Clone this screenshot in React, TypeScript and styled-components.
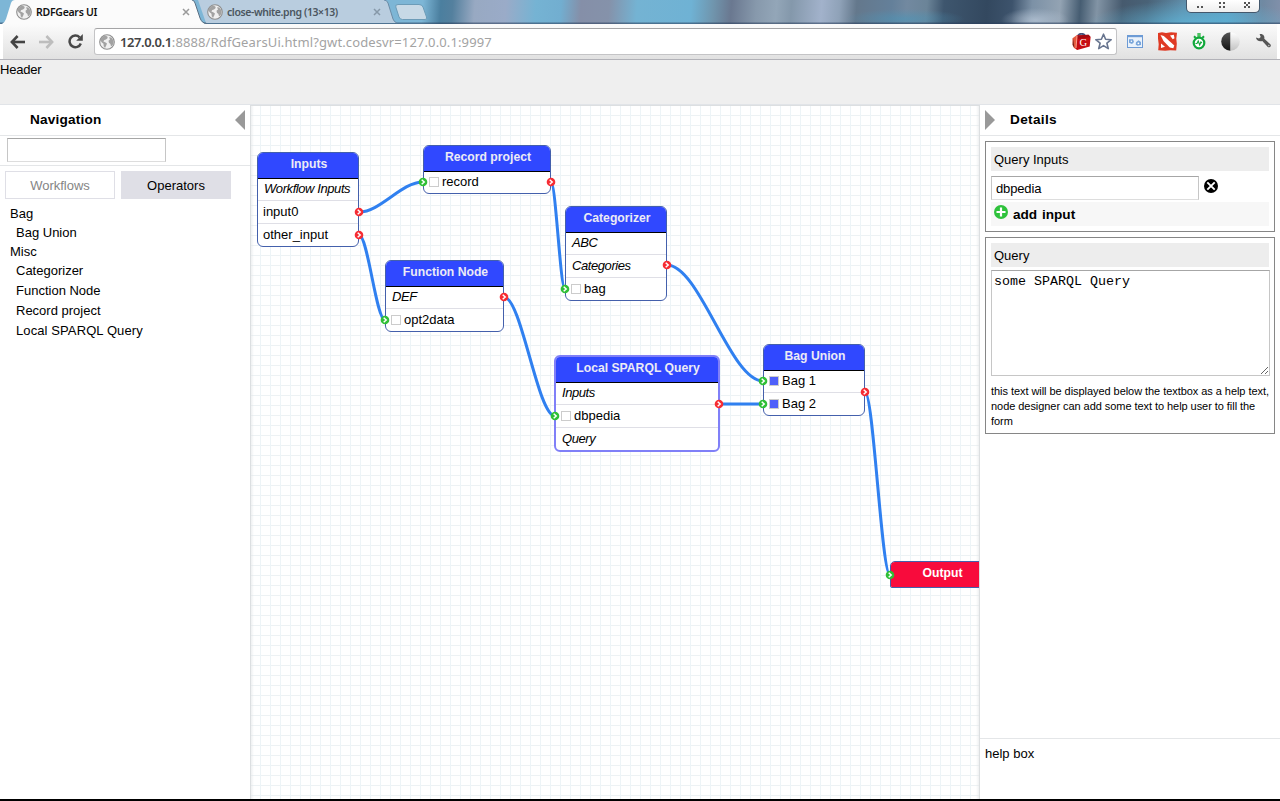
import React from "react";
import styled, { createGlobalStyle } from "styled-components";

const GlobalStyle = createGlobalStyle`
  *, *::before, *::after { box-sizing: border-box; }
  html, body { margin: 0; padding: 0; overflow: hidden; }
  body { background: #fff; color: #000; font: 13px/16px "Liberation Sans", Arial, sans-serif; }
  svg { display: block; flex: none; }
`;

const Window = styled.div`
  width: 1280px;
  height: 801px;
  display: flex;
  flex-direction: column;
  overflow: hidden;
  border-bottom: 2px solid #000;
`;

/* ---------- browser chrome ---------- */

const TabStrip = styled.div`
  height: 24px;
  flex: none;
  display: flex;
  align-items: flex-start;
  position: relative;
  overflow: hidden;
  background:
    linear-gradient(180deg, transparent 22px, rgba(40, 60, 90, 0.55) 23px),
    radial-gradient(ellipse 34px 12px at 1035px 20px, rgba(180, 195, 212, 0.8), transparent),
    radial-gradient(ellipse 60px 10px at 905px 19px, rgba(75, 150, 185, 0.6), transparent),
    radial-gradient(ellipse 110px 26px at 1195px 26px, rgba(95, 180, 215, 0.9), transparent),
    linear-gradient(94deg, #7db6d6 0, #7db6d6 422px, #4b7f9f 440px, #54809e 452px, #98a9c2 474px,
      #9aabc8 505px, #75b3d3 535px, #72aed0 560px, #858fa8 580px, #8592aa 608px, #74b3d3 636px,
      #6fb2d4 690px, #7095ad 712px, #6a7890 730px, #8799ac 755px, #93a6b8 775px, #8498ab 790px,
      #a2b2cb 820px, #8fa2b8 838px, #64788c 855px, #64809a 890px, #7289a0 905px, #6b8498 925px,
      #3e566e 942px, #33485f 985px, #3d536c 1010px, #7c91a6 1030px, #93a3b3 1058px, #465d72 1078px,
      #8294a5 1095px, #465a6e 1120px, #496277 1145px, #5f8ba7 1180px, #5c9fc2 1225px, #7089a2 1260px, #8391ab 1280px);
`;

const Tab = styled.div<{ $active?: boolean }>`
  height: 24px;
  width: ${(p) => (p.$active ? 206 : 200)}px;
  margin-left: ${(p) => (p.$active ? 0 : -8)}px;
  padding-left: ${(p) => (p.$active ? 16 : 9)}px;
  display: flex;
  align-items: center;
  position: relative;
  z-index: ${(p) => (p.$active ? 1 : 0)};
  font: 600 10.5px/24px "Noto Sans", "Open Sans", sans-serif;
  color: ${(p) => (p.$active ? "#111" : "#4b5660")};
`;

const TabShape = styled.svg`
  position: absolute;
  left: 0;
  top: 0;
`;

const TabLabel = styled.span<{ $width: number; $spacing: number }>`
  position: relative;
  width: ${(p) => p.$width}px;
  margin-left: 4px;
  white-space: nowrap;
  letter-spacing: ${(p) => p.$spacing}px;
`;

const TabIcon = styled.span`
  position: relative;
  display: block;
`;

const NewTab = styled.svg`
  margin: 4px 0 0 -3px;
`;

const WindowControls = styled.div`
  position: absolute;
  left: 1186px;
  top: 0;
  width: 74px;
  height: 13px;
  border: 1px solid #44586c;
  border-top: 0;
  border-radius: 0 0 5px 5px;
  background: linear-gradient(#fff, #eee);
`;

const Toolbar = styled.div`
  height: 36px;
  flex: none;
  display: flex;
  align-items: center;
  padding: 0 8px 0 10px;
  border-bottom: 1px solid #b2b2b8;
  background: linear-gradient(90deg, #fff 3px, transparent 3px, transparent 1277px, #fff 1277px),
    linear-gradient(#fbfbfb, #e1e1e1);
  gap: 14px;
`;

const AddressBar = styled.div`
  width: 1023px;
  height: 27px;
  margin-left: -3px;
  padding: 0 4px;
  display: flex;
  align-items: center;
  border: 1px solid #c4c4c6;
  border-top-color: #a4a4a6;
  border-radius: 3px;
  background: #fff;
`;

const Url = styled.span`
  flex: 1;
  margin-left: 5px;
  font: 13px/20px "Noto Sans", "Open Sans", sans-serif;
  letter-spacing: 0.12px;
  color: #a3a3a3;
  b { color: #444; font-weight: 600; letter-spacing: -0.4px; }
`;

const PageActions = styled.div`
  display: flex;
  align-items: center;
  gap: 4px;
`;

const Extensions = styled.div`
  display: flex;
  align-items: center;
  margin-left: -4px;
  gap: 15px;
`;

/* ---------- application ---------- */

const Header = styled.header`
  height: 45px;
  flex: none;
  padding-top: 2px;
  background: #efefef;
  border-bottom: 1px solid #e1e4e8;
  letter-spacing: -0.2px;
`;

const Body = styled.main`
  flex: 1;
  min-height: 0;
  display: flex;
`;

const Panel = styled.aside<{ $width: number }>`
  width: ${(p) => p.$width}px;
  flex: none;
  display: flex;
  flex-direction: column;
  background: #fff;
`;

const PanelTitle = styled.div<{ $side: "left" | "right" }>`
  height: 31px;
  flex: none;
  display: flex;
  align-items: center;
  justify-content: ${(p) => (p.$side === "left" ? "space-between" : "flex-start")};
  gap: 15px;
  padding: ${(p) => (p.$side === "left" ? "0 5px 0 30px" : "0 5px")};
  border-bottom: 1px solid #e4e6e8;
  font-weight: bold;
  font-size: 13.6px;
  letter-spacing: ${(p) => (p.$side === "left" ? 0.2 : 0.35)}px;
`;

const TextInput = styled.input`
  display: block;
  height: 24px;
  padding: 1px 4px;
  border: 1px solid #c6c6c6;
  border-top-color: #a6a6a6;
  border-bottom-color: #ddd;
  border-radius: 0;
  outline: none;
  background: #fff;
  color: #000;
  font: 13px "Liberation Sans", Arial, sans-serif;
  letter-spacing: -0.15px;
`;

const SearchRow = styled.div`
  height: 30px;
  padding: 2px 7px;
  border-bottom: 1px solid #e4e6e8;
  ${TextInput} { width: 159px; }
`;

const TabButtons = styled.div`
  display: flex;
  gap: 6px;
  padding: 5px 5px;
`;

const TabButton = styled.button<{ $active?: boolean }>`
  width: 110px;
  height: 28px;
  padding: 0;
  border: 1px solid #dfdfe6;
  background: ${(p) => (p.$active ? "#dfdfe6" : "#fff")};
  color: ${(p) => (p.$active ? "#000" : "#858585")};
  font: 13px "Liberation Sans", Arial, sans-serif;
`;

const Group = styled.section`
  padding-left: 10px;
`;

const GroupName = styled.div`
  height: 19px;
  line-height: 19px;
`;

const OperatorList = styled.div`
  display: flex;
  flex-direction: column;
  gap: 1px;
  padding-left: 6px;
`;

const Operator = styled.div`
  height: 19px;
  line-height: 19px;
  letter-spacing: ${(p) => (String(p.children).includes("SPARQL") ? 0.1 : 0)}px;
`;

/* ---------- workflow canvas ---------- */

const Canvas = styled.div`
  width: 730px;
  flex: none;
  position: relative;
  overflow: hidden;
  border: solid #dcdfe1;
  border-width: 1px 1px 0 1px;
  background:
    linear-gradient(90deg, rgba(225, 228, 230, 0.55), transparent 3px),
    linear-gradient(270deg, rgba(225, 228, 230, 0.55), transparent 3px),
    linear-gradient(90deg, transparent 9px, #edf4f7 9px) 0 0 / 10px 10px,
    linear-gradient(180deg, transparent 9px, #edf2f4 9px) 0 0 / 10px 10px,
    #fff;
`;

const NodeBox = styled.div<{ $selected?: boolean; $output?: boolean }>`
  position: absolute;
  border: ${(p) => (p.$selected ? "2px solid #8080f8" : "1px solid #4460ac")};
  border-radius: ${(p) => (p.$output ? "5px 5px 2px 2px" : "6px")};
  background: #fff;
  overflow: hidden;
`;

const NodeTitle = styled.div<{ $output?: boolean }>`
  height: ${(p) => (p.$output ? 25 : 26)}px;
  padding-left: 2px;
  border-bottom: ${(p) => (p.$output ? 0 : "1px solid #000")};
  background: ${(p) => (p.$output ? "#f80b3c" : "#3048ff")};
  color: ${(p) => (p.$output ? "#fff" : "#ecebf5")};
  font-weight: bold;
  font-size: 12.2px;
  line-height: 23px;
  text-align: center;
  white-space: nowrap;
`;

const NodeRow = styled.div<{ $italic?: boolean }>`
  box-sizing: content-box;
  height: 22px;
  display: flex;
  align-items: center;
  gap: 3px;
  padding-left: ${(p) => (p.$italic ? 6 : 5)}px;
  border-bottom: 1px solid #dfdfe6;
  font-style: ${(p) => (p.$italic ? "italic" : "normal")};
  letter-spacing: ${(p) => (p.$italic ? "-0.42px" : "0")};
  line-height: 20px;
  white-space: nowrap;
  ${NodeTitle} + & { height: 20px; padding-bottom: 1px; }
  &:last-child { border-bottom: 0; }
`;

const Check = styled.span<{ $filled?: boolean }>`
  width: 10px;
  height: 10px;
  border: 1px solid #ccc;
  background: ${(p) => (p.$filled ? "#4f60fa" : "#fff")};
`;

const Layer = styled.svg`
  position: absolute;
  left: 0;
  top: 0;
`;

/* ---------- details ---------- */

const Details = styled.div`
  flex: 1;
  padding: 5px;
  display: flex;
  flex-direction: column;
  gap: 5px;
`;

const FieldBox = styled.section<{ $height: number }>`
  height: ${(p) => p.$height}px;
  padding: 5px;
  border: 1px solid #868686;
`;

const FieldTitle = styled.div`
  width: 278px;
  height: 24px;
  padding-left: 3px;
  line-height: 25px;
  background: #ededed;
`;

const ValueRow = styled.div`
  display: flex;
  gap: 5px;
  margin-top: 5px;
  svg { margin-top: 3px; }
  ${TextInput} { width: 208px; }
`;

const AddRow = styled.div`
  width: 278px;
  height: 24px;
  margin-top: 2px;
  padding: 3px 3px 0;
  display: flex;
  gap: 5px;
  background: #f7f7f7;
  font-weight: bold;
  font-size: 13.6px;
  line-height: 20px;
  word-spacing: 1px;
`;

const QueryArea = styled.textarea`
  display: block;
  width: 279px;
  height: 106px;
  margin-top: 3px;
  padding: 3px 2px;
  border: 1px solid #c6c6c6;
  border-top-color: #a6a6a6;
  border-radius: 0;
  outline: none;
  background: #fff;
  color: #000;
  font: 13.33px/16px "Liberation Mono", "Courier New", monospace;
`;

const Hint = styled.p`
  width: 284px;
  margin: 8px 0 0;
  font-size: 11px;
  line-height: 15px;
  letter-spacing: -0.055px;
`;

const HelpBox = styled.div`
  height: 61px;
  flex: none;
  padding: 7px 5px;
  border-top: 1px solid #e4e6e8;
`;

/* ---------- icons ---------- */

const Globe = ({ size = 16 }: { size?: number }) => (
  <svg width={size} height={size} viewBox="0 0 16 16">
    <circle cx="8" cy="8" r="7.3" fill="#f0f0f0" stroke="#8d8d8d" strokeWidth="1.1" />
    <path d="M2 4.2 5 1.8 8.2 2.2 8.7 4 7 5.6 5.3 6 4.4 7.5 6.2 8.2 8 9.6 7.2 11.6 6 14 4.7 12.3 4.5 9.8 2.6 8.2 1.4 6.3z" fill="#a2a2a2" />
    <path d="M10 3.2 12.4 3.4 14.5 6.6 14.6 9 13.4 11.6 12 12.2 11.4 9.9 9.9 8.8 9.5 6.7 11 5.4z" fill="#a2a2a2" />
  </svg>
);

const CloseX = ({ color }: { color: string }) => (
  <svg width="8" height="8" viewBox="0 0 8 8">
    <path d="M1 1 7 7M7 1 1 7" stroke={color} strokeWidth="1.5" />
  </svg>
);

const Arrow = ({ color, flip }: { color: string; flip?: boolean }) => (
  <svg width="15" height="14" viewBox="0 0 15 14">
    <g transform={flip ? "matrix(-1 0 0 1 15 0)" : undefined} fill="none" stroke={color} strokeWidth="2.6">
      <path d="M1.8 7H15" />
      <path d="M7.6 1 1.9 7l5.7 6" />
    </g>
  </svg>
);

const Reload = () => (
  <svg width="15" height="15" viewBox="0 0 15 15">
    <path d="M12.8 9.5A5.8 5.8 0 1 1 11.6 3.4" fill="none" stroke="#484848" strokeWidth="2.5" />
    <path d="M14.8 0v6.8H8.2z" fill="#484848" />
  </svg>
);

const Toolbox = () => (
  <svg width="19" height="18" viewBox="0 0 19 18">
    <path d="M6 2.5Q9-1 13 2.3" fill="none" stroke="#46507a" strokeWidth="1.8" />
    <path d="M.5 5.2 5 2 5.6 17 2 15 .6 12z" fill="#e65a3e" />
    <path d="M1 5 .7 12 2.4 15z" fill="#702018" />
    <path d="M5 2.4 16.5 1.8 18.6 4 17.7 13.5 5.2 17 3.6 15.5z" fill="#c60d12" />
    <path d="m5 2.4 11.5-.6L18.6 4 6 6z" fill="#a20a12" />
    <path d="M5 3 4 15" stroke="#ffb09a" strokeWidth=".9" />
    <text x="7.6" y="13" fontFamily="Liberation Serif, serif" fontSize="10.5" fill="#fff">G</text>
  </svg>
);

const Star = () => (
  <svg width="17" height="17" viewBox="0 0 17 17">
    <path d="m8.500 1.200 2.100 5.100 5.600.4-4.300 3.500 1.400 5.400-4.800-3-4.800 3 1.400-5.400L.800 6.700l5.600-.4z" fill="#fff" stroke="#68758f" strokeWidth="1.6" strokeLinejoin="round" />
  </svg>
);

const WindowIcon = () => (
  <svg width="16" height="13" viewBox="0 0 16 13">
    <rect x=".5" y=".5" width="15" height="12" fill="#eaf2fb" stroke="#6d9bd5" />
    <path d="M0 1.2h16" stroke="#6d9bd5" strokeWidth="2" />
    <path d="M2 4.2h4l1 2.7-2 2-3-1.2zM9 7.2l2.5-2L14 7v3l-3.500.7-1.800-1.200z" fill="#78a5da" />
    <circle cx="4.4" cy="6.3" r=".8" fill="#fff" />
    <circle cx="11.4" cy="8.3" r=".9" fill="#fff" />
  </svg>
);

const SwordIcon = () => (
  <svg width="19" height="19" viewBox="0 0 19 19">
    <path d="m0 1 4-.8 4 .7 5-.7 6 .6-.7 6 .5 5-.6 6.800-6-.4-5 .5-7-.5.5-6L0 6.500z" fill="#df3a24" />
    <path d="m2.500 3 3.300 1 10.500 9.600-1 2.600-3.500-.7L5.500 9z" fill="#fff" />
    <path d="m12 3.500 3.800-.8.700 3.600-1.800 1zM3 11.500l4 3.300-4 1.200z" fill="#fff" />
  </svg>
);

const Stopwatch = () => (
  <svg width="14" height="17" viewBox="0 0 14 17">
    <path d="M5.300 0h3.400v4H5.300z" fill="#4cc262" />
    <path d="m2 3.200 1.700 1.700M12 3.200l-1.700 1.700" stroke="#10a83a" strokeWidth="2" />
    <circle cx="7" cy="10" r="5.300" fill="#fff" stroke="#10a83a" strokeWidth="2.200" />
    <path d="M3.500 10.500H5L6.200 8l1.500 4 1.200-3 1 1" fill="none" stroke="#10a83a" strokeWidth="1.100" />
  </svg>
);

const HalfCircle = () => (
  <svg width="19" height="19" viewBox="0 0 19 19">
    <defs>
      <linearGradient id="dark" x1="0" y1="0" x2="0" y2="1"><stop stopColor="#555" /><stop offset="1" stopColor="#111" /></linearGradient>
      <linearGradient id="light" x1="0" y1="0" x2="0" y2="1"><stop stopColor="#fff" /><stop offset="1" stopColor="#c2c2c2" /></linearGradient>
    </defs>
    <path d="M9.500.2a9.300 9.300 0 0 0 0 18.600z" fill="url(#dark)" />
    <path d="M9.500.2a9.300 9.300 0 0 1 0 18.600z" fill="url(#light)" />
  </svg>
);

const Wrench = () => (
  <svg width="17" height="17" viewBox="0 0 17 17">
    <path d="M1 4.600 4 5.600 5.700 4 4.600 1.100C8 .5 10 3 9.300 5.800l6 5.400c1.600 1.800-.7 4.200-2.500 2.700L7.300 8C4.500 9 1 7.400 1 4.600z" fill="#555" />
    <circle cx="13.800" cy="12.600" r=".8" fill="#bbb" />
  </svg>
);

const Triangle = ({ right }: { right?: boolean }) => (
  <svg width="10" height="20" viewBox="0 0 10 20">
    <path d={right ? "M0 0 10 10 0 20z" : "M10 0 0 10 10 20z"} fill="#999" />
  </svg>
);

const RemoveIcon = () => (
  <svg width="14" height="14" viewBox="0 0 14 14">
    <circle cx="7" cy="7" r="7" fill="#000" />
    <path d="m3.300 3.300 7.400 7.400M10.700 3.300 3.300 10.700" stroke="#fff" strokeWidth="1.900" />
  </svg>
);

const AddIcon = () => (
  <svg width="14" height="14" viewBox="0 0 14 14">
    <circle cx="7" cy="7" r="7" fill="#2fc23c" />
    <path d="M7 2.500v9M2.500 7h9" stroke="#fff" strokeWidth="2.200" />
  </svg>
);

/* ---------- data ---------- */

type Row = { text: string; italic?: boolean; check?: "empty" | "filled" };
type NodeData = { title: string; x: number; y: number; w: number; rows: Row[]; selected?: boolean; output?: boolean };

/* Node positions are measured from the page corner; the canvas content starts at this origin. */
const ORIGIN = { x: 251, y: 106 };

const nodes: NodeData[] = [
  { title: "Inputs", x: 257, y: 152, w: 102, rows: [{ text: "Workflow Inputs", italic: true }, { text: "input0" }, { text: "other_input" }] },
  { title: "Record project", x: 423, y: 145, w: 128, rows: [{ text: "record", check: "empty" }] },
  { title: "Function Node", x: 385, y: 260, w: 119, rows: [{ text: "DEF", italic: true }, { text: "opt2data", check: "empty" }] },
  { title: "Categorizer", x: 565, y: 206, w: 102, rows: [{ text: "ABC", italic: true }, { text: "Categories", italic: true }, { text: "bag", check: "empty" }] },
  { title: "Local SPARQL Query", x: 554, y: 355, w: 166, selected: true, rows: [{ text: "Inputs", italic: true }, { text: "dbpedia", check: "empty" }, { text: "Query", italic: true }] },
  { title: "Bag Union", x: 763, y: 344, w: 102, rows: [{ text: "Bag 1", check: "filled" }, { text: "Bag 2", check: "filled" }] },
  { title: "Output", x: 890, y: 561, w: 103, rows: [], output: true },
];

const edges: [number, number, number, number][] = [
  [359, 212, 423, 182],
  [359, 235, 385, 320],
  [551, 182, 565, 289],
  [504, 297, 555, 416],
  [667, 265, 763, 381],
  [719, 404, 763, 404],
  [865, 392, 890, 575],
];

const edgePath = ([x1, y1, x2, y2]: [number, number, number, number]) => {
  const k = (x2 - x1) * 0.34;
  return `M${x1} ${y1}C${x1 + k} ${y1} ${x2 - k} ${y2} ${x2} ${y2}`;
};

const Port = ({ x, y, color }: { x: number; y: number; color: string }) => (
  <g transform={`translate(${x} ${y})`}>
    <circle r="4.300" fill={color} />
    <path d="M-1.300-2.300 1.200 0-1.300 2.300" fill="none" stroke="#fff" strokeWidth="1.500" />
  </g>
);

const WorkflowNode = ({ node }: { node: NodeData }) => (
  <NodeBox
    $selected={node.selected}
    $output={node.output}
    style={{ left: node.x - ORIGIN.x, top: node.y - ORIGIN.y, width: node.w }}
  >
    <NodeTitle $output={node.output}>{node.title}</NodeTitle>
    {node.rows.map((row) => (
      <NodeRow key={row.text} $italic={row.italic}>
        {row.check && <Check $filled={row.check === "filled"} />}
        {row.text}
      </NodeRow>
    ))}
  </NodeBox>
);

export default function App() {
  return (
    <Window>
      <GlobalStyle />
      <TabStrip>
        <Tab $active>
          <TabShape width="208" height="24">
            <path d="M2 24Q5 22 6 19L11 3Q12 0 15 0H191Q194 0 195 3L200 18Q202 24 207 24z" fill="#fbfbfb" />
            <path d="M192 0Q194 0 195 3L200 18Q202 23.500 207 23.500" fill="none" stroke="#5a6f84" />
          </TabShape>
          <TabIcon><Globe /></TabIcon>
          <TabLabel $width={146} $spacing={-0.27}>RDFGears UI</TabLabel>
          <TabIcon><CloseX color="#9a9a9a" /></TabIcon>
        </Tab>
        <Tab>
          <TabShape width="200" height="24">
            <path d="M0 0H186Q189 0 190 3L195 19Q196 22 199 23H8z" fill="#b9cddf" />
            <path d="M186 0Q189 0 190 3L195 19Q196 22 199 23" fill="none" stroke="#6a8ba6" />
          </TabShape>
          <TabIcon><Globe /></TabIcon>
          <TabLabel $width={146} $spacing={-0.42}>close-white.png (13×13)</TabLabel>
          <TabIcon><CloseX color="#8698a8" /></TabIcon>
        </Tab>
        <NewTab width="33" height="16" viewBox="0 0 33 16">
          <path d="M3 .5H24Q27 .5 28 3L31.500 13Q32.500 15.500 30 15.500H7.500Q5 15.500 4 13L.8 3Q0 .5 3 .5z" fill="#c7d9e6" stroke="#6c9cb8" />
        </NewTab>
        <WindowControls>
          <svg width="72" height="12" viewBox="0 0 72 12" fill="#555">
            <path d="M10 6h2v2h-2zM14 6h2v2h-2zM32 2h2v2h-2zM36 2h2v2h-2zM32 6h2v2h-2zM36 6h2v2h-2z" />
            <path d="M57 2h2v2h-2zM61 2h2v2h-2zM59 4h2v2h-2zM57 6h2v2h-2zM61 6h2v2h-2z" />
          </svg>
        </WindowControls>
      </TabStrip>
      <Toolbar>
        <Arrow color="#444" />
        <Arrow color="#bdbdbd" flip />
        <Reload />
        <AddressBar>
          <Globe />
          <Url><b>127.0.0.1</b>:8888/RdfGearsUi.html?gwt.codesvr=127.0.0.1:9997</Url>
          <PageActions>
            <Toolbox />
            <Star />
          </PageActions>
        </AddressBar>
        <Extensions>
          <WindowIcon />
          <SwordIcon />
          <Stopwatch />
          <HalfCircle />
          <Wrench />
        </Extensions>
      </Toolbar>

      <Header>Header</Header>

      <Body>
        <Panel $width={250}>
          <PanelTitle $side="left">
            Navigation
            <Triangle />
          </PanelTitle>
          <SearchRow><TextInput /></SearchRow>
          <TabButtons>
            <TabButton>Workflows</TabButton>
            <TabButton $active>Operators</TabButton>
          </TabButtons>
          <Group>
            <GroupName>Bag</GroupName>
            <OperatorList><Operator>Bag Union</Operator></OperatorList>
          </Group>
          <Group>
            <GroupName>Misc</GroupName>
            <OperatorList>
              <Operator>Categorizer</Operator>
              <Operator>Function Node</Operator>
              <Operator>Record project</Operator>
              <Operator>Local SPARQL Query</Operator>
            </OperatorList>
          </Group>
        </Panel>

        <Canvas>
          {nodes.map((node) => <WorkflowNode key={node.title} node={node} />)}
          <Layer width="728" height="693" viewBox={`${ORIGIN.x} ${ORIGIN.y} 728 693`}>
            {edges.map((edge) => (
              <path key={edge.join()} d={edgePath(edge)} fill="none" stroke="#3080f0" strokeWidth="3" />
            ))}
            {edges.map(([x1, y1, x2, y2]) => (
              <g key={`${x1}-${y1}`}>
                <Port x={x1} y={y1} color="#f62c33" />
                <Port x={x2} y={y2} color="#2fbf36" />
              </g>
            ))}
          </Layer>
        </Canvas>

        <Panel $width={300}>
          <PanelTitle $side="right">
            <Triangle right />
            Details
          </PanelTitle>
          <Details>
            <FieldBox $height={91}>
              <FieldTitle>Query Inputs</FieldTitle>
              <ValueRow>
                <TextInput defaultValue="dbpedia" />
                <RemoveIcon />
              </ValueRow>
              <AddRow><AddIcon />add input</AddRow>
            </FieldBox>
            <FieldBox $height={197}>
              <FieldTitle>Query</FieldTitle>
              <QueryArea defaultValue="some SPARQL Query" />
              <Hint>this text will be displayed below the textbox as a help text, node designer can add some text to help user to fill the form</Hint>
            </FieldBox>
          </Details>
          <HelpBox>help box</HelpBox>
        </Panel>
      </Body>
    </Window>
  );
}
